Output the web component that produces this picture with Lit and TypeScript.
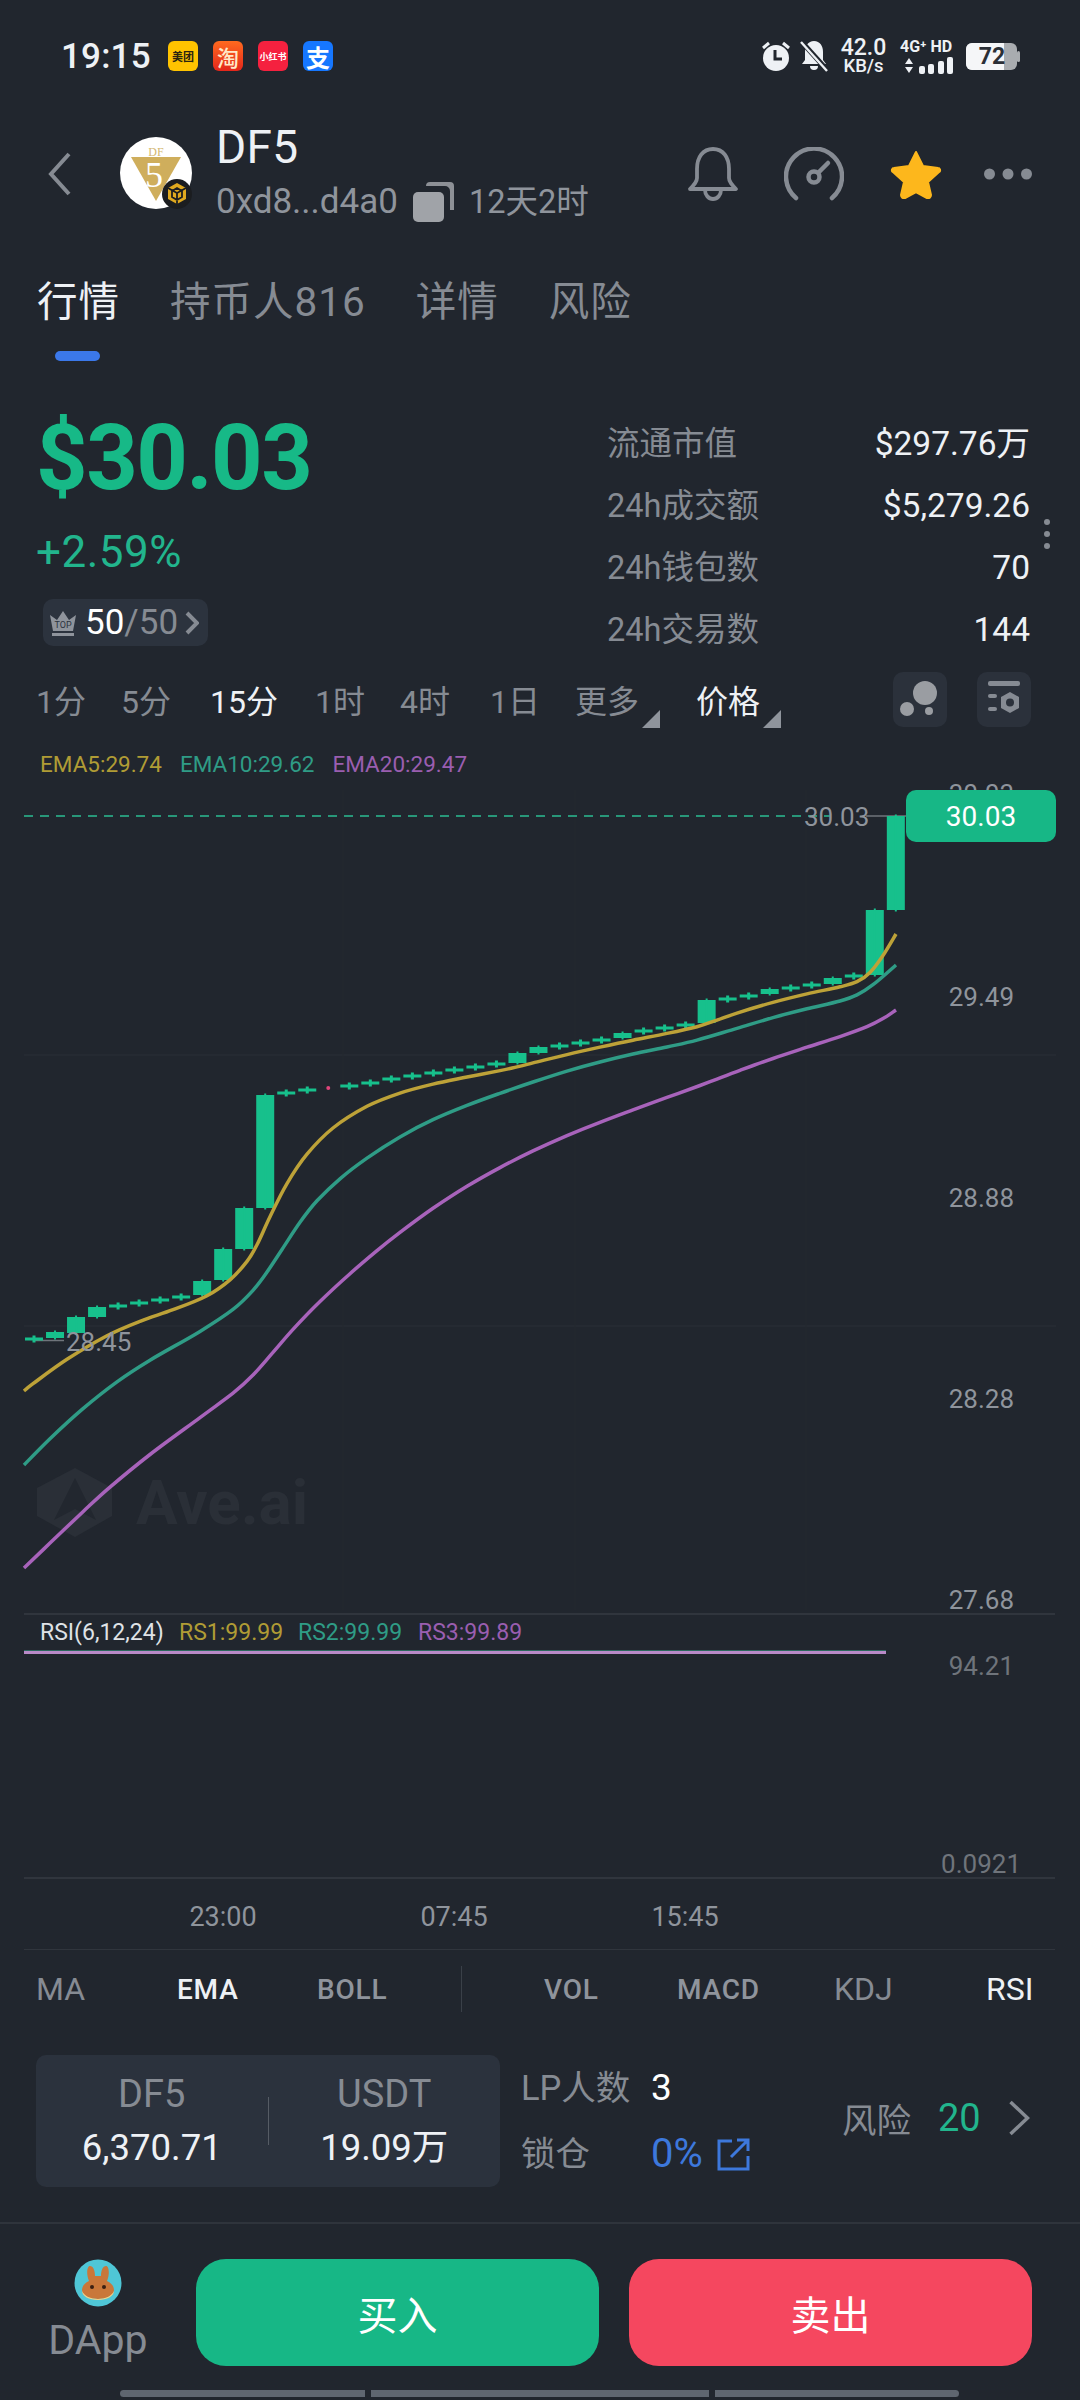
import { LitElement, html, css, svg } from "lit";
import { customElement } from "lit/decorators.js";

type P = [number, number];
const yellow: P[] = [[24,1391],[33,1383],[67,1357],[107,1333],[140,1320],[173,1310],[207,1300],[230,1283],[247,1263],[257,1250],[270,1213],[287,1180],[307,1150],[333,1123],[367,1103],[400,1092],[433,1083],[467,1077],[500,1071],[517,1067],[533,1063],[567,1054],[600,1047],[633,1040],[667,1033],[697,1029],[717,1020],[737,1012],[773,1002],[807,993],[840,987],[857,984],[870,977],[883,957],[896,934]];
const green: P[] = [[24,1465],[50,1437],[83,1407],[117,1380],[150,1358],[200,1333],[233,1313],[253,1293],[267,1273],[282,1250],[300,1220],[317,1198],[340,1177],[367,1157],[400,1135],[433,1118],[467,1105],[500,1093],[533,1082],[567,1070],[600,1062],[633,1053],[667,1047],[697,1042],[737,1028],[773,1017],[807,1008],[840,1002],[857,997],[873,987],[896,965]];
const purple: P[] = [[24,1568],[50,1543],[83,1512],[110,1485],[150,1453],[200,1417],[233,1395],[253,1378],[273,1352],[293,1328],[320,1300],[350,1273],[377,1250],[400,1232],[433,1207],[467,1185],[500,1167],[533,1150],[567,1135],[600,1122],[633,1110],[667,1097],[700,1086],[717,1079],[740,1070],[773,1058],[807,1047],[840,1037],[867,1028],[883,1020],[896,1010]];

// candle body [top, bottom]; equal values are dojis
const candles: P[] = [[1339,1339],[1332,1338],[1317,1333],[1307,1317],[1306,1306],[1303,1303],[1300,1300],[1297,1297],[1281,1295],[1249,1280],[1208,1249],[1095,1208],[1093,1093],[1090,1090],[1088,1088],[1086,1086],[1083,1083],[1079,1079],[1076,1076],[1073,1073],[1070,1070],[1067,1067],[1064,1064],[1053,1063],[1047,1053],[1046,1046],[1043,1043],[1040,1040],[1033,1038],[1031,1031],[1028,1028],[1025,1025],[1000,1023],[999,999],[996,996],[989,994],[988,988],[985,985],[978,984],[976,976],[910,975],[816,910]];

function relax(p: P[]): P[] {
  return p.map((c, i) => {
    if (i === 0 || i === p.length - 1) return c;
    const a = p[i - 1], b = p[i + 1];
    // keep x, pull y towards the chord through the neighbours
    const t = (c[0] - a[0]) / (b[0] - a[0]);
    const chord = a[1] + (b[1] - a[1]) * t;
    return [c[0], c[1] * 0.6 + chord * 0.4] as P;
  });
}

function smooth(raw: P[]): string {
  const p = relax(relax(raw));
  let d = `M${p[0][0]} ${p[0][1]}`;
  for (let i = 0; i < p.length - 1; i++) {
    const a = p[Math.max(i - 1, 0)], b = p[i], c = p[i + 1], e = p[Math.min(i + 2, p.length - 1)];
    d += `C${(b[0] + (c[0] - a[0]) / 6).toFixed(1)} ${(b[1] + (c[1] - a[1]) / 6).toFixed(1)} ${(c[0] - (e[0] - b[0]) / 6).toFixed(1)} ${(c[1] - (e[1] - b[1]) / 6).toFixed(1)} ${c[0]} ${c[1].toFixed(1)}`;
  }
  return d;
}

@customElement("app-root")
export class AppRoot extends LitElement {
  static styles = css`
    :host { display: block; width: 1080px; height: 2400px; background: #21262e; color: #eef1f5; overflow: hidden;
      font-family: Roboto, "Noto Sans CJK SC", sans-serif; font-size: 32px; }
    svg { display: block; flex: none; }
    .status { height: 112px; display: flex; align-items: center; padding: 0 60px 0 61px; box-sizing: border-box; }
    .clock { font-size: 35px; font-weight: 500; letter-spacing: .2px; width: 107px; }
    .apps { display: flex; gap: 15px; }
    .app { width: 30px; height: 30px; border-radius: 6px; display: flex; align-items: center; justify-content: center; font-weight: 700; overflow: hidden; }
    .app.mt { background: #ffc300; color: #2b2410; font-size: 11px; }
    .app.tb { background: linear-gradient(#ff6a1f, #e3261b); color: #ffe9c8; font-size: 22px; font-weight: 500; }
    .app.xh { background: #f5213f; color: #fff; font-size: 9px; }
    .app.zf { background: #1677ff; color: #fff; font-size: 24px; }
    .status-right { margin-left: auto; display: flex; align-items: center; }
    .speed { width: 47px; margin: 0 13px 0 12px; text-align: center; font-weight: 500; }
    .speed b { display: block; font-size: 23px; font-weight: 500; line-height: 23px; margin-top: -2px; }
    .speed i { display: block; font-size: 18.5px; font-style: normal; line-height: 15px; }
    .net { width: 56px; margin-right: 10px; }
    .net b { display: block; font-size: 16px; line-height: 15px; white-space: nowrap; font-weight: 700; }
    .net svg { margin-top: 3px; }
    .battery { position: relative; width: 54px; height: 27px; }
    .battery span { position: absolute; inset: 0 14px 0 0; text-align: center; color: #2b2f36; font-size: 23px; line-height: 27px; font-weight: 700; padding-left: 12px; }

    .header { height: 124px; display: flex; align-items: center; padding: 0 48px; position: relative; }
    .avatar { margin-left: 49px; }
    .title { margin-left: 24px; margin-top: -2px; }
    .name { font-size: 46px; line-height: 52px; letter-spacing: .3px; margin-top: -4px; }
    .sub { display: flex; align-items: center; color: #8f949c; font-size: 35px; line-height: 40px; margin-top: 9px; }
    .sub svg { margin: 0 15px; }
    .sub span { font-size: 32.5px; }
    .actions { margin-left: auto; display: flex; align-items: center; }
    .gauge { margin-left: 44px; }
    .star { margin-left: 46px; }
    .more { margin-left: 42px; }

    .tabs { height: 139px; box-sizing: border-box; padding: 41px 0 0 37px; display: flex; gap: 50px; font-size: 40.5px; letter-spacing: 1px; color: #868b93; line-height: 50px; }
    .tabs .on { color: #eef1f5; position: relative; }
    .tabs .on::after { content: ""; position: absolute; left: 18px; top: 74px; width: 45px; height: 10px; border-radius: 5px; background: #3b78ea; }

    .summary { height: 295px; display: flex; justify-content: space-between; padding: 0 50px 0 36px; position: relative; }
    .price { font-size: 90px; font-weight: 700; color: #17b987; line-height: 90px; margin-top: 39px; letter-spacing: -1.5px; }
    .change { font-size: 44px; color: #22b58d; line-height: 48px; margin-top: 24px; letter-spacing: .5px; }
    .top { margin: 23px 0 0 7px; width: 165px; height: 47px; box-sizing: border-box; background: #2c333e; border-radius: 10px; display: flex; align-items: center; padding-left: 6px; font-size: 35px; color: #868b93; }
    .top b { color: #fff; font-weight: 400; margin-left: 8px; }
    .stats { width: 423px; padding-top: 44px; font-size: 32.5px; color: #868b93; }
    .stat { display: flex; justify-content: space-between; height: 62px; line-height: 50px; }
    .stat b { font-weight: 400; color: #eef1f5; font-size: 33.5px; }
    .vdots { position: absolute; right: 30px; top: 144px; display: flex; flex-direction: column; gap: 6px; }
    .vdots i { width: 6px; height: 6px; border-radius: 50%; background: #868b93; }

    .frames { height: 58px; display: grid; grid-template-columns: 85px 89px 105px 85px 90px 85px 121px 197px 84px 54px; padding-left: 36px; align-items: center; font-size: 32px; color: #868b93; }
    .frames .on { color: #eef1f5; }
    .tri { display: inline-flex; align-items: flex-end; gap: 3px; }
    .sq { width: 54px; height: 55px; background: #2b313b; border-radius: 10px; display: flex; align-items: center; justify-content: center; }
    .legend { height: 52px; display: flex; gap: 18px; padding: 16px 0 0 40px; box-sizing: border-box; font-size: 22.5px; line-height: 40px; }
    .c1 { color: #b09c35; } .c2 { color: #2f9c86; } .c3 { color: #9a5eb0; }

    .chart { width: 1080px; height: 1170px; }
    .chart text { font-family: Roboto, sans-serif; }

    .ind { height: 78px; display: grid; grid-template-columns: 141px 140px 144px 83px 133px 157px 152px auto; padding-left: 36px; align-items: center; font-size: 32px; color: #868b93; }
    .ind .n { font-size: 28px; font-weight: 500; letter-spacing: .8px; color: #8f949c; }
    .ind .on { color: #eef1f5; }
    .ind .sep { width: 1px; height: 46px; background: #3a4048; }

    .info { height: 196px; box-sizing: border-box; border-bottom: 2px solid #2f343c; padding: 27px 50px 0 36px; display: flex; font-size: 34.5px; color: #868b93; }
    .pool { width: 464px; height: 132px; border-radius: 10px; background: #2b323d; display: grid; grid-template-columns: 1fr 1px 1fr; align-items: center; text-align: center; line-height: 54px; font-size: 38px; }
    .pool b { display: block; color: #eef1f5; font-weight: 400; font-size: 36.5px; }
    .pool .bar { height: 48px; background: #565c65; }
    .lp { margin-left: 21px; width: 321px; line-height: 50px; }
    .lp div { display: flex; align-items: center; height: 66px; }
    .lp span { width: 130px; white-space: nowrap; }
    .lp b { color: #fff; font-weight: 400; font-size: 37px; }
    .lp .blue { color: #3d78dc; width: 66px; font-size: 40px; }
    .risk { display: flex; align-items: center; height: 126px; flex: 1; }
    .risk b { font-weight: 400; color: #22b58d; margin-left: 27px; font-size: 38px; }
    .risk svg { margin-left: auto; }

    .cta { height: 166px; box-sizing: border-box; padding: 35px 48px 0 0; display: flex; align-items: flex-start; }
    .dapp { width: 196px; display: flex; flex-direction: column; align-items: center; font-size: 41px; color: #868b93; line-height: 50px; }
    .dapp span { margin-top: 8px; }
    .btn { width: 403px; height: 107px; border-radius: 30px; display: flex; align-items: center; justify-content: center; color: #fff; font-size: 40px; }
    .buy { background: #17b786; }
    .sell { margin-left: 30px; background: #f5475f; }

    .nav { display: flex; gap: 6px; padding-left: 120px; }
    .nav i { height: 7px; background: #5f6670; }
    .nav i:nth-child(1) { width: 245px; border-radius: 4px 0 0 4px; }
    .nav i:nth-child(2) { width: 338px; }
    .nav i:nth-child(3) { width: 244px; border-radius: 0 4px 4px 0; }
  `;

  private statusBar() {
    return html`<div class="status">
      <div class="clock">19:15</div>
      <div class="apps">
        <div class="app mt">美团</div><div class="app tb">淘</div><div class="app xh">小红书</div><div class="app zf">支</div>
      </div>
      <div class="status-right">
        <svg width="30" height="32" viewBox="0 0 30 32"><circle cx="15" cy="18" r="13" fill="#eef1f5"/><path d="M14 10v9h7" fill="none" stroke="#21262e" stroke-width="3"/><path d="M2 8l6-5M28 8l-6-5" stroke="#eef1f5" stroke-width="3"/></svg>
        <svg style="margin-left:9px" width="28" height="32" viewBox="0 0 28 32"><path d="M14 1c6 0 9 5 9 11v8l3 4H2l3-4v-8C5 6 8 1 14 1z" fill="#eef1f5"/><path d="M10 26a4 4 0 0 0 8 0z" fill="#eef1f5"/><path d="M1 1l26 29" stroke="#21262e" stroke-width="5"/><path d="M1 2l26 29" stroke="#eef1f5" stroke-width="2.4"/></svg>
        <div class="speed"><b>42.0</b><i>KB/s</i></div>
        <div class="net"><b>4G⁺ HD</b>
          <svg width="56" height="17" viewBox="0 0 56 17"><path d="M5 7l4-6 4 6zM5 10h8l-4 6z" fill="#eef1f5"/><rect x="19" y="9" width="6" height="8" rx="2" fill="#eef1f5"/><rect x="28" y="7" width="6" height="10" rx="2" fill="#eef1f5"/><rect x="38" y="4" width="6" height="13" rx="2" fill="#eef1f5"/><rect x="47" y="0" width="6" height="17" rx="2" fill="#eef1f5"/></svg>
        </div>
        <div class="battery">
          <svg width="54" height="27" viewBox="0 0 54 27"><rect width="51" height="27" rx="6" fill="#a9acb0"/><path d="M6 0h32v27H6a6 6 0 0 1-6-6V6a6 6 0 0 1 6-6z" fill="#f5f6f8"/><rect x="51" y="8" width="3" height="11" rx="1.5" fill="#a9acb0"/></svg>
          <span>72</span>
        </div>
      </div>
    </div>`;
  }

  private header() {
    return html`<div class="header">
      <svg width="23" height="44" viewBox="0 0 23 44"><path d="M21 2L3 22l18 20" fill="none" stroke="#868b93" stroke-width="4"/></svg>
      <svg class="avatar" width="72" height="74" viewBox="0 0 72 74">
        <circle cx="36" cy="36" r="36" fill="#fff"/>
        <path d="M11 20h50L36 64z" fill="#cfae5c"/>
        <text x="36" y="19" font-family="Liberation Serif" font-size="12" fill="#d3b771" text-anchor="middle">DF</text>
        <text x="34" y="50" font-family="Liberation Serif" font-size="36" fill="#fff" text-anchor="middle">5</text>
        <circle cx="57" cy="57" r="15" fill="#1b1d20"/>
        <path d="M57 46l9 5v11l-9 5-9-5V51z" fill="#e0a91f"/>
        <path d="M57 51l5 3v6l-5 3-5-3v-6zM48 51l9 5 9-5M57 56v11" fill="none" stroke="#1b1d20" stroke-width="1.8"/>
      </svg>
      <div class="title">
        <div class="name">DF5</div>
        <div class="sub">0xd8...d4a0
          <svg width="41" height="40" viewBox="0 0 41 40"><path d="M13 4a4 4 0 0 1 4-4h20a4 4 0 0 1 4 4v24h-4V9a5 5 0 0 0-5-5z" fill="#a0a3a8" opacity=".85"/><rect y="10" width="31" height="30" rx="5" fill="#a0a3a8"/></svg>
          <span>12天2时</span></div>
      </div>
      <div class="actions">
        <svg width="54" height="54" viewBox="0 0 52 54"><path d="M10 31V22C10 10 16 2 26 2s16 8 16 20v9c0 4 3 7 7 11H3c4-4 7-7 7-11z" fill="none" stroke="#868b93" stroke-width="3.800" stroke-linejoin="round"/><path d="M18 43a8 9 0 0 0 16 0" fill="none" stroke="#868b93" stroke-width="3.800"/></svg>
        <svg class="gauge" width="60" height="54" viewBox="0 0 60 54"><path d="M12 51a28 28 0 1 1 36 0" fill="none" stroke="#868b93" stroke-width="4.500" stroke-linecap="round"/><circle cx="30" cy="30" r="5.500" fill="none" stroke="#868b93" stroke-width="4.500"/><path d="M35 25l9-9" stroke="#868b93" stroke-width="4.500" stroke-linecap="round"/></svg>
        <svg class="star" width="52" height="50" viewBox="0 0 52 50"><path d="M26 3l7 14 15 2c2 0 3 3 1 4L38 33l3 13c0 2-2 4-4 3l-11-6-11 6c-2 1-4-1-4-3l3-13L3 23c-2-1-1-4 1-4l15-2 7-14z" fill="#fdb71c" stroke="#fdb71c" stroke-width="2" stroke-linejoin="round"/></svg>
        <svg class="more" width="48" height="12" viewBox="0 0 48 12"><circle cx="5.500" cy="6" r="5.500" fill="#868b93"/><circle cx="24" cy="6" r="5.500" fill="#868b93"/><circle cx="42.500" cy="6" r="5.500" fill="#868b93"/></svg>
      </div>
    </div>`;
  }

  private summary() {
    const rows = [["流通市值", "$297.76万"], ["24h成交额", "$5,279.26"], ["24h钱包数", "70"], ["24h交易数", "144"]];
    return html`<div class="summary">
      <div>
        <div class="price">$30.03</div>
        <div class="change">+2.59%</div>
        <div class="top">
          <svg width="28" height="28" viewBox="0 0 28 28"><path d="M1 6l7 5 6-9 6 9 7-5-3 16H4z" fill="#8f949c"/><rect x="3" y="24" width="22" height="3" fill="#8f949c"/><text x="14" y="19" font-size="9" text-anchor="middle" fill="#2c333e" font-family="Roboto">TOP</text></svg>
          <b>50</b>/50
          <svg style="margin-left:7px" width="14" height="24" viewBox="0 0 14 24"><path d="M2 2l10 10L2 22" fill="none" stroke="#868b93" stroke-width="4"/></svg>
        </div>
      </div>
      <div class="stats">
        ${rows.map(([k, v]) => html`<div class="stat"><span>${k}</span><b>${v}</b></div>`)}
      </div>
      <div class="vdots"><i></i><i></i><i></i></div>
    </div>`;
  }

  private frames() {
    const tri = html`<svg width="18" height="18" viewBox="0 0 18 18" style="margin-bottom:-6px"><path d="M18 0v18H0z" fill="#8f949c"/></svg>`;
    return html`<div class="frames">
      <span>1分</span><span>5分</span><span class="on">15分</span><span>1时</span><span>4时</span><span>1日</span>
      <span class="tri">更多${tri}</span><span class="tri on">价格${tri}</span>
      <div class="sq"><svg width="42" height="40" viewBox="0 0 42 40"><circle cx="26" cy="14" r="12" fill="#9a9da2"/><circle cx="8" cy="30" r="7" fill="#9a9da2"/><circle cx="30" cy="32" r="4" fill="#9a9da2"/></svg></div>
      <div class="sq"><svg width="34" height="36" viewBox="0 0 34 36"><rect x="1" y="0" width="32" height="5" rx="2" fill="#868b93"/><rect x="1" y="13" width="9" height="4" rx="2" fill="#868b93"/><rect x="1" y="26" width="9" height="4" rx="2" fill="#868b93"/><path d="M23 11l9 5v11l-9 5-9-5V16z" fill="#868b93"/><circle cx="23" cy="21.500" r="4" fill="#2b313b"/></svg></div>
    </div>`;
  }

  private chart() {
    const top = 780;
    const bodies = candles.map(([t, b], i) => {
      const x = 34 + 21.02 * i;
      const up = "#17c08c";
      if (i === 14) return svg`<circle cx=${x} cy=${t} r="2" fill="#e0457b"/>`;
      if (t === b) return svg`<rect x=${x - 9} y=${t - 1.5} width="18" height="3" fill=${up}/><rect x=${x - 1.5} y=${t - 3.5} width="3" height="7" fill=${up}/>`;
      return svg`<rect x=${x - 9} y=${t} width="18" height=${b - t} fill=${up}/><rect x=${x - 1} y=${t - 1.5} width="2" height=${b - t + 3} fill=${up}/>`;
    });
    return html`<svg class="chart" viewBox="0 ${top} 1080 1170">
      <path d="M24 1326H1056M24 1055H1056" stroke="#272c34" stroke-width="1.500" fill="none"/>
      <path d="M343 790V1610M575 790V1610M806 790V1610" stroke="#24292f" stroke-width="1" fill="none"/>
      <path d="M24 1614H1055M24 1878H1055M24 1950H1055" stroke="#30353d" stroke-width="2" fill="none"/>

      <path d="M75 1468l37 20v28l-37 21-38-21v-28z" fill="#2a2f37"/>
      <path d="M75 1478l21 42-21-11-21 11z" fill="#22272f"/>
      <text x="136" y="1524" font-size="62" font-weight="700" fill="#2a2f37">Ave.ai</text>

      <path d="M24 816H830" stroke="#2bbd93" stroke-width="1.500" stroke-dasharray="9 7" fill="none"/>
      <path d="M866 816H906" stroke="#6f747b" stroke-width="1.500"/>
      <path d="M34 1340.500H64" stroke="#6f747b" stroke-width="1.500"/>
      ${bodies}
      <path d=${smooth(purple)} fill="none" stroke="#a863bb" stroke-width="3.500"/>
      <path d=${smooth(green)} fill="none" stroke="#2f9c86" stroke-width="3.500"/>
      <path d=${smooth(yellow)} fill="none" stroke="#bda238" stroke-width="3.500"/>
      <path d="M24 1651H886" stroke="#3bab8f" stroke-width="1"/>
      <path d="M24 1652.500H886" stroke="#b98ac8" stroke-width="3"/>

      <g font-size="26" fill="#8f949c" text-anchor="end">
        <text x="1014" y="803">30.03</text>
        <text x="1014" y="1006">29.49</text>
        <text x="1014" y="1207">28.88</text>
        <text x="1014" y="1408">28.28</text>
        <text x="1014" y="1609">27.68</text>
        <text x="1014" y="1675" fill="#6f747b">94.21</text>
        <text x="1021" y="1873" fill="#6f747b">0.0921</text>
      </g>
      <text x="804" y="826" font-size="26" fill="#8f949c">30.03</text>
      <text x="66" y="1351" font-size="26" fill="#8f949c">28.45</text>

      <rect x="906" y="790" width="150" height="52" rx="10" fill="#17b786"/>
      <text x="981" y="826" font-size="28" fill="#fff" text-anchor="middle">30.03</text>

      <g font-size="23">
        <text x="40" y="1640" fill="#dfe2e6">RSI(6,12,24)</text>
        <text x="179" y="1640" fill="#b09c35">RS1:99.99</text>
        <text x="298" y="1640" fill="#2f9c86">RS2:99.99</text>
        <text x="418" y="1640" fill="#9a5eb0">RS3:99.89</text>
      </g>
      <g font-size="27" fill="#8f949c" text-anchor="middle">
        <text x="223" y="1926">23:00</text>
        <text x="454" y="1926">07:45</text>
        <text x="685" y="1926">15:45</text>
      </g>
    </svg>`;
  }

  private bottom() {
    return html`
      <div class="ind">
        <span>MA</span><span class="n on">EMA</span><span class="n">BOLL</span><i class="sep"></i>
        <span class="n">VOL</span><span class="n">MACD</span><span>KDJ</span><span class="on">RSI</span>
      </div>
      <div class="info">
        <div class="pool">
          <div>DF5<b>6,370.71</b></div><div class="bar"></div><div>USDT<b>19.09万</b></div>
        </div>
        <div class="lp">
          <div><span>LP人数</span><b>3</b></div>
          <div><span>锁仓</span><b class="blue">0%</b>
            <svg width="33" height="33" viewBox="0 0 33 33"><path d="M15 3H2v28h29V18" fill="none" stroke="#3d78dc" stroke-width="3"/><path d="M14 19L30 3M20 2h11v11" fill="none" stroke="#3d78dc" stroke-width="3"/></svg>
          </div>
        </div>
        <div class="risk">风险<b>20</b>
          <svg width="22" height="36" viewBox="0 0 21 36"><path d="M2 2l17 16L2 34" fill="none" stroke="#868b93" stroke-width="3.500"/></svg>
        </div>
      </div>
      <div class="cta">
        <div class="dapp">
          <svg width="48" height="48" viewBox="0 0 48 48">
            <circle cx="24" cy="24" r="23.500" fill="#4fc6d6"/>
            <path d="M15 22c-3-7-2-15 1-15s5 4 5 10h6c0-6 2-10 5-10s4 8 1 15c4 2 7 5 7 9 0 6-8 9-16 9S8 37 8 31c0-4 3-7 7-9z" fill="#c9773a"/>
            <path d="M8 32c2 5 9 8 16 8s14-3 16-8c0 5-7 9-16 9S8 37 8 32z" fill="#f3d48b"/>
            <circle cx="18" cy="28" r="2" fill="#3a2013"/><circle cx="30" cy="28" r="2" fill="#3a2013"/>
          </svg>
          <span>DApp</span>
        </div>
        <div class="btn buy">买入</div>
        <div class="btn sell">卖出</div>
      </div>
      <div class="nav"><i></i><i></i><i></i></div>`;
  }

  render() {
    return html`
      ${this.statusBar()}
      ${this.header()}
      <div class="tabs"><span class="on">行情</span><span>持币人816</span><span>详情</span><span>风险</span></div>
      ${this.summary()}
      ${this.frames()}
      <div class="legend"><span class="c1">EMA5:29.74</span><span class="c2">EMA10:29.62</span><span class="c3">EMA20:29.47</span></div>
      ${this.chart()}
      ${this.bottom()}
    `;
  }
}
